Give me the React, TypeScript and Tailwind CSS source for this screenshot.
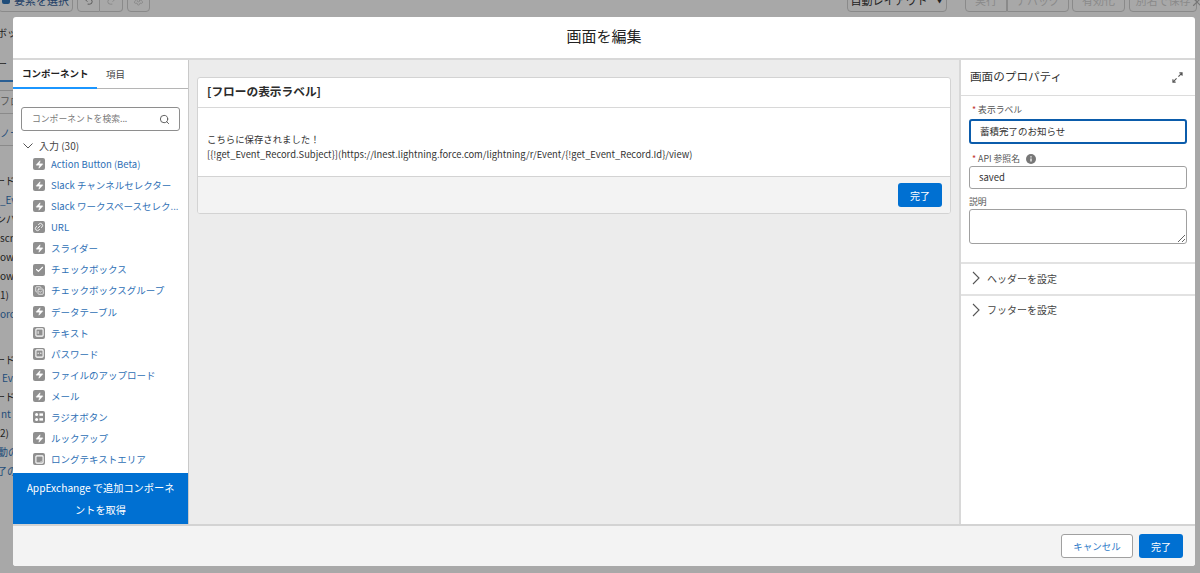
import React from "react";
import { Search, Zap, Link2, Check, CopyCheck, Undo2, Redo2, Settings, X } from "lucide-react";

const font = { fontFamily: '"Noto Sans CJK JP", "Noto Sans", sans-serif' };

type Kind = "bolt" | "link" | "check" | "group" | "text" | "pass" | "radio" | "area";
const items: [string, Kind][] = [
  ["Action Button (Beta)", "bolt"],
  ["Slack チャンネルセレクター", "bolt"],
  ["Slack ワークスペースセレク...", "bolt"],
  ["URL", "link"],
  ["スライダー", "bolt"],
  ["チェックボックス", "check"],
  ["チェックボックスグループ", "group"],
  ["データテーブル", "bolt"],
  ["テキスト", "text"],
  ["パスワード", "pass"],
  ["ファイルのアップロード", "bolt"],
  ["メール", "bolt"],
  ["ラジオボタン", "radio"],
  ["ルックアップ", "bolt"],
  ["ロングテキストエリア", "area"],
];

function Glyph({ kind }: { kind: Kind }) {
  if (kind === "bolt") return <Zap className="w-[9px] h-[9px] text-white fill-white" strokeWidth={1} />;
  if (kind === "link") return <Link2 className="w-[10px] h-[10px] text-white -rotate-45" strokeWidth={2} />;
  if (kind === "check") return <Check className="w-[9px] h-[9px] text-white" strokeWidth={3} />;
  if (kind === "group") return <CopyCheck className="w-[9px] h-[9px] text-white" strokeWidth={2} />;
  if (kind === "text")
    return (
      <svg viewBox="0 0 10 10" className="w-[9px] h-[9px]">
        <rect x="1" y="1" width="8" height="8" rx="1" fill="none" stroke="white" strokeWidth="1.2" />
        <path d="M3.5 3.5v3" stroke="white" strokeWidth="1" />
      </svg>
    );
  if (kind === "pass")
    return (
      <svg viewBox="0 0 10 10" className="w-[9px] h-[9px]">
        <rect x="1" y="1" width="8" height="8" rx="1" fill="none" stroke="white" strokeWidth="1.2" />
        <circle cx="3.6" cy="4.6" r=".8" fill="white" />
        <circle cx="6.4" cy="4.6" r=".8" fill="white" />
      </svg>
    );
  if (kind === "radio")
    return (
      <svg viewBox="0 0 10 10" className="w-[10px] h-[10px]">
        <circle cx="2.6" cy="2.6" r="1.5" fill="white" />
        <circle cx="2.6" cy="7.4" r="1.5" fill="white" />
        <rect x="5.4" y="1.4" width="3.6" height="2.4" fill="white" />
        <rect x="5.4" y="6.2" width="3.6" height="2.4" fill="white" />
      </svg>
    );
  return (
    <svg viewBox="0 0 10 10" className="w-[9px] h-[9px]">
      <rect x="1" y="1" width="8" height="8" rx="1" fill="none" stroke="white" strokeWidth="1.2" />
      <path d="M6.5 7.5l1-1" stroke="white" strokeWidth="1" />
    </svg>
  );
}

function ChevR() {
  return (
    <svg viewBox="0 0 8 14" className="w-[8px] h-[14px] text-[#555] shrink-0" fill="none" stroke="currentColor" strokeWidth="1.1">
      <path d="M1 1l6 6-6 6" />
    </svg>
  );
}

function TopBtn({ children, className }: { children: React.ReactNode; className: string }) {
  return (
    <div className={`h-[24px] -mt-[12px] border border-[#8a8a8a] rounded-[4px] flex items-center justify-center text-[11px] ${className}`}>
      {children}
    </div>
  );
}

const strip: [number, number, string, string][] = [
  [33, -3, "ボッ", "text-[#222]"],
  [64, -3, "ー", "text-[#222]"],
  [101, 0, "フロ", "text-[#555]"],
  [133, 0, "ノー", "text-[#1f4d7a]"],
  [181, -5, "ード", "text-[#222]"],
  [200, 0, "_Ev", "text-[#1f4d7a]"],
  [219, -4, "ンパ", "text-[#222]"],
  [238, 0, "scri", "text-[#222]"],
  [257, 0, "ow_", "text-[#222]"],
  [276, 0, "ow_", "text-[#222]"],
  [295, 0, "1)", "text-[#222]"],
  [314, 0, "orc", "text-[#1f4d7a]"],
  [360, -5, "ード", "text-[#222]"],
  [378, 2, "Ev", "text-[#1f4d7a]"],
  [397, -5, "ード", "text-[#222]"],
  [414, 1, "nt", "text-[#1f4d7a]"],
  [433, 0, "2)", "text-[#222]"],
  [452, -2, "動の", "text-[#1f4d7a]"],
  [471, -3, "了の", "text-[#1f4d7a]"],
];

export default function App() {
  return (
    <div style={font} className="relative w-[1200px] h-[573px] overflow-hidden bg-[#a8a8a8] text-[#3e3e3c]">
      {/* page behind the dialog */}
      <div className="flex items-start text-[#555] h-[17px]">
        <TopBtn className="w-[75px] ml-[-2px] gap-[4px] text-[#1f3f66]">
          <span className="w-[8px] h-[8px] rounded-[2px] bg-[#1f4d7a] shrink-0" />
          要素を選択
        </TopBtn>
        <div className="flex ml-[4px]">
          <TopBtn className="w-[23px] rounded-r-none"><Undo2 className="w-[11px] h-[11px]" /></TopBtn>
          <TopBtn className="w-[23px] rounded-l-none border-l-0"><Redo2 className="w-[11px] h-[11px] text-[#888]" /></TopBtn>
        </div>
        <TopBtn className="w-[23px] ml-[4px]"><Settings className="w-[11px] h-[11px] text-[#888]" /></TopBtn>
        <TopBtn className="w-[100px] ml-[697px] text-[#222] gap-2">自動レイアウト<span className="text-[8px]">▼</span></TopBtn>
        <div className="flex ml-[18px]">
          <TopBtn className="w-[42px] rounded-r-none text-[#8a8a8a]">実行</TopBtn>
          <TopBtn className="w-[62px] rounded-l-none border-l-[#8a8a8a] text-[#8a8a8a]">デバッグ</TopBtn>
        </div>
        <TopBtn className="w-[53px] ml-[3px] text-[#8a8a8a]">有効化</TopBtn>
        <TopBtn className="w-[68px] ml-[4px] text-[#8a8a8a]">別名で保存</TopBtn>
      </div>
      <div className="absolute left-0 top-0 w-[13px] h-full overflow-hidden text-[10px] whitespace-nowrap">
        {strip.map(([y, x, t, c]) => (
          <div key={y} className={`absolute leading-[14px] ${c}`} style={{ top: y - 7, left: x }}>
            {t}
          </div>
        ))}
        <div className="absolute left-0 top-[80px] w-full h-[2px] bg-[#2a5f94]" />
        <div className="absolute left-0 top-[90px] w-full h-px bg-[#8a8a8a]" />
        <div className="absolute left-0 top-[113px] w-full h-px bg-[#8a8a8a]" />
        <div className="absolute left-0 top-[145px] w-full h-px bg-[#8a8a8a]" />
      </div>
      <X className="absolute right-[-4px] top-[-5px] w-[14px] h-[14px] text-[#777]" />

      {/* dialog */}
      <div className="absolute left-[13px] top-[17px] w-[1182px] h-[549px] bg-white rounded-[3px] flex flex-col overflow-hidden">
        <div className="h-[38px] shrink-0 flex items-center justify-center pb-[3px] text-[15px] text-[#222] border-b-2 border-[#d8d8d8] box-content">
          画面を編集
        </div>

        <div className="flex-1 flex min-h-0">
          {/* left */}
          <div className="w-[176px] shrink-0 border-r border-[#c9c9c9] flex flex-col">
            <div className="h-[29px] shrink-0 flex border-b border-[#b5b5b5] text-[9.5px]">
              <div className="w-[84px] h-[29px] border-b-2 border-[#1b96ff] flex items-center pl-[9px] font-bold text-[#222]">コンポーネント</div>
              <div className="flex items-center pl-[9px] text-[#444]">項目</div>
            </div>
            <div className="mx-[8px] mt-[18px] h-[24px] shrink-0 border border-[#8e8e8e] rounded-[3px] flex items-center justify-between pl-[10px] pr-[9px] text-[8.8px] text-[#7a7a7a]">
              <span>コンポーネントを検索...</span>
              <Search className="w-[11px] h-[11px] text-[#555]" strokeWidth={2} />
            </div>
            <div className="flex items-center h-[15px] mt-[7px] pl-[10px] text-[10px] text-[#444] shrink-0">
              <svg viewBox="0 0 10 6" className="w-[10px] h-[6px] text-[#555] shrink-0" fill="none" stroke="currentColor" strokeWidth="1">
                <path d="M.5.5L5 5 9.5.5" />
              </svg>
              <span className="ml-[6px]">入力 (30)</span>
            </div>
            <div className="flex-1 flex flex-col min-h-0 pt-[0.5px]">
              {items.map(([t, k]) => (
                <div key={t} className="h-[21.1px] shrink-0 flex items-center pl-[20px] text-[9.5px] text-[#2e6fb5] whitespace-nowrap">
                  <span className="w-[12px] h-[12px] rounded-[2px] bg-[#8f8f8f] flex items-center justify-center shrink-0">
                    <Glyph kind={k} />
                  </span>
                  <span className="ml-[6px]">{t}</span>
                </div>
              ))}
            </div>
            <div className="h-[51px] shrink-0 bg-[#0070d2] text-white text-[10.2px] text-center leading-[22px] px-[10px] pt-[4px]">
              AppExchange で追加コンポーネントを取得
            </div>
          </div>

          {/* centre */}
          <div className="flex-1 bg-[#ececec] px-[8px] pt-[17px] min-w-0">
            <div className="bg-white border border-[#d3d3d3] rounded-[3px] overflow-hidden">
              <div className="h-[30px] flex items-center pl-[9px] pb-[3px] text-[11.7px] font-bold text-[#2b2b2b] border-b border-[#d8d8d8]">
                [フローの表示ラベル]
              </div>
              <div className="h-[69px] border-b border-[#d3d3d3] pl-[9px] pt-[23.5px] text-[9.4px] leading-[15px] text-[#333]">
                <div>こちらに保存されました！</div>
                <div>[{"{"}!get_Event_Record.Subject{"}"}](https://lnest.lightning.force.com/lightning/r/Event/{"{"}!get_Event_Record.Id{"}"}/view)</div>
              </div>
              <div className="h-[36px] bg-[#f3f3f3] flex items-center justify-end pr-[8px]">
                <div className="w-[44px] h-[24px] bg-[#0070d2] rounded-[3px] text-white text-[10px] flex items-center justify-center">完了</div>
              </div>
            </div>
          </div>

          {/* right */}
          <div className="w-[236px] shrink-0 border-l-2 border-[#d8d8d8] flex flex-col">
            <div className="h-[36px] shrink-0 border-b border-[#dcdcdc] flex items-center justify-between pl-[9px] pr-[12px] pb-[1px] text-[11.6px] text-[#333]">
              <span>画面のプロパティ</span>
              <svg viewBox="0 0 12 12" className="w-[11px] h-[11px] text-[#555]" fill="none" stroke="currentColor" strokeWidth="1.2">
                <path d="M7 5l4-4M8 1h3v3M5 7l-4 4M1 8v3h3" />
              </svg>
            </div>
            <div className="px-[8px] pt-[8px] text-[8.8px] text-[#555]">
              <div className="h-[14px] flex items-center leading-none pl-[3px] pb-[1px]"><span className="text-[#c23934] mr-[2px]">*</span>表示ラベル</div>
              <div className="h-[25px] mt-[1px] border-2 border-[#0b5cab] rounded-[3px] flex items-center pl-[9px] text-[9.5px] text-[#333]">蓄積完了のお知らせ</div>
              <div className="h-[14px] mt-[8px] flex items-center leading-none pl-[3px]">
                <span className="text-[#c23934] mr-[2px]">*</span>API 参照名
                <svg viewBox="0 0 10 10" className="w-[10px] h-[10px] ml-[6px]">
                  <circle cx="5" cy="5" r="5" fill="#777" />
                  <path d="M5 4.4v3.2M5 2.2v1.2" stroke="white" strokeWidth="1.3" />
                </svg>
              </div>
              <div className="h-[23px] border border-[#a0a0a0] rounded-[3px] flex items-center pl-[9px] text-[9.5px] text-[#333]">saved</div>
              <div className="h-[14px] mt-[6px] flex items-center leading-none">説明</div>
              <textarea className="block w-full h-[35px] border border-[#a0a0a0] rounded-[3px]" readOnly />
            </div>
            <div className="mt-[18px] border-t-2 border-[#e2e2e2] h-[32px] flex items-center pl-[11px] pb-[2px] text-[10px] text-[#444]">
              <ChevR />
              <span className="ml-[7px]">ヘッダーを設定</span>
            </div>
            <div className="border-t-2 border-[#e2e2e2] h-[31px] flex items-center pl-[11px] pb-[2px] text-[10px] text-[#444]">
              <ChevR />
              <span className="ml-[7px]">フッターを設定</span>
            </div>
          </div>
        </div>

        {/* footer */}
        <div className="h-[42px] shrink-0 bg-[#f3f3f3] border-t-2 border-[#d3d3d3] flex items-center justify-end gap-[6px] pr-[12px]">
          <div className="w-[72px] h-[24px] bg-white border border-[#a0a0a0] rounded-[3px] text-[#2e7ac7] text-[9.5px] flex items-center justify-center">キャンセル</div>
          <div className="w-[44px] h-[24px] bg-[#0070d2] rounded-[3px] text-white text-[10px] flex items-center justify-center">完了</div>
        </div>
      </div>
    </div>
  );
}
